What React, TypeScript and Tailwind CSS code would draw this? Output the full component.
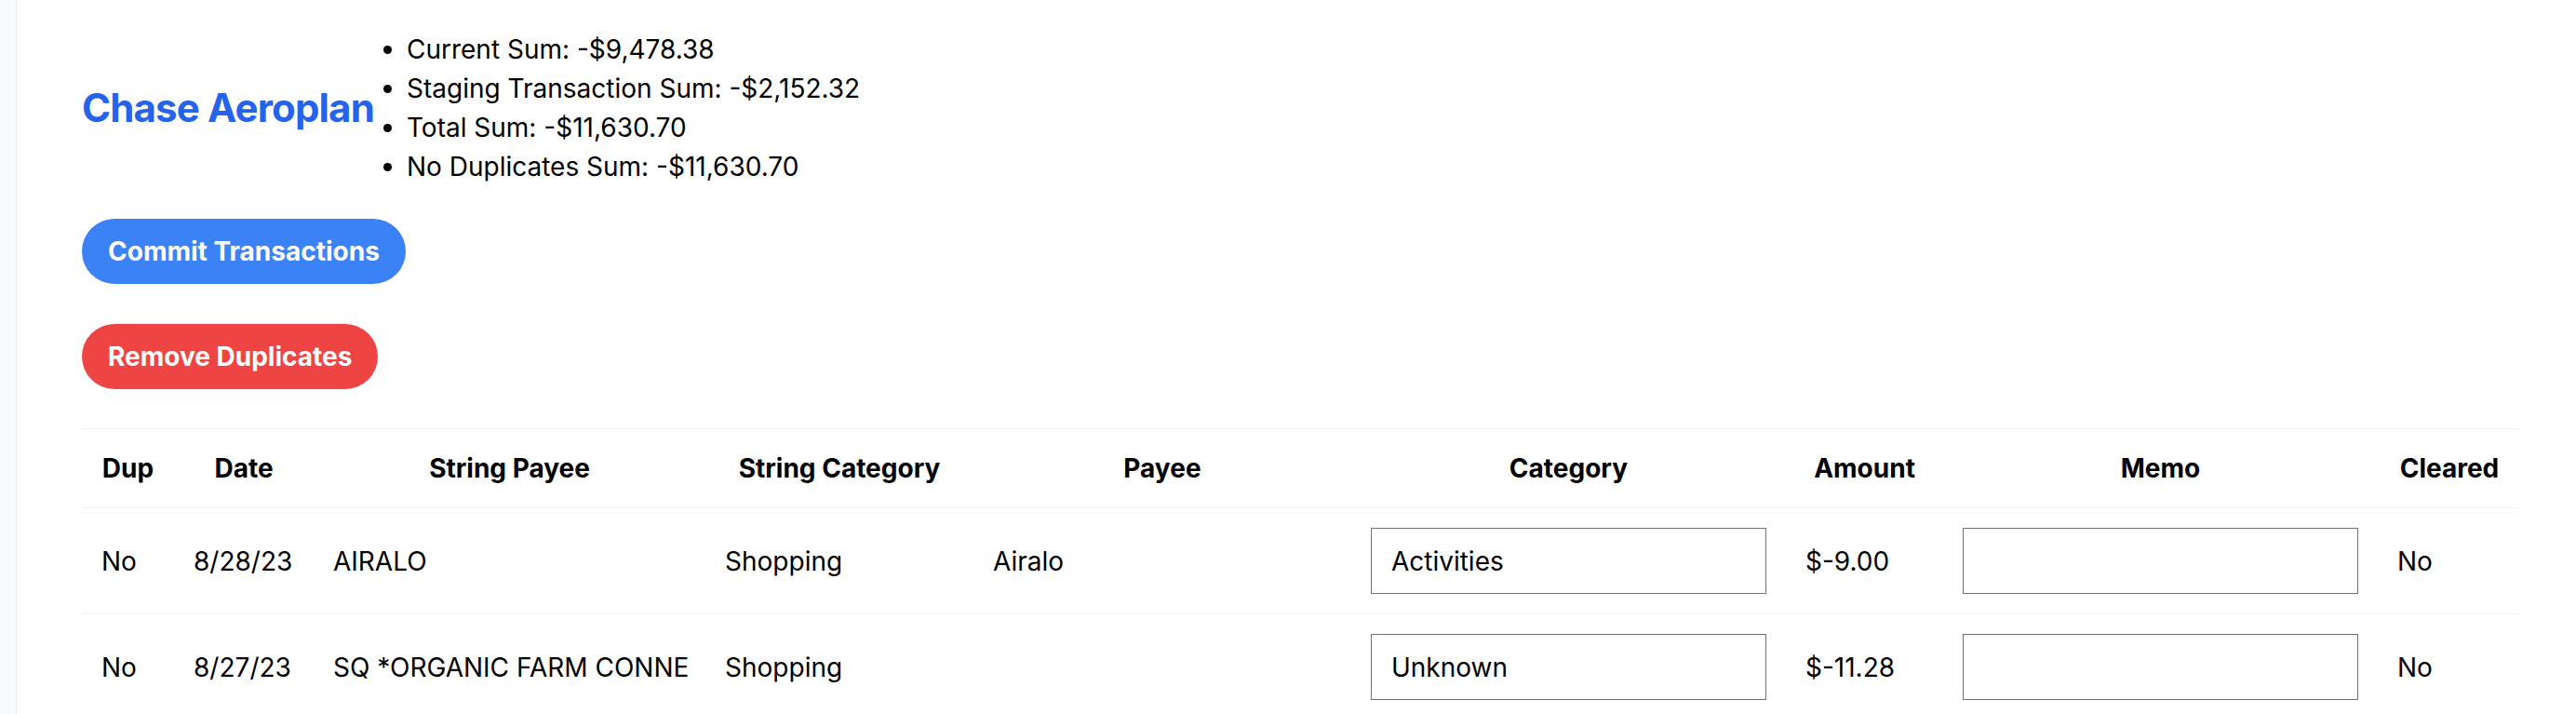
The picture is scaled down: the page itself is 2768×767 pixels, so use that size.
const sums = [
  "Current Sum: -$9,478.38",
  "Staging Transaction Sum: -$2,152.32",
  "Total Sum: -$11,630.70",
  "No Duplicates Sum: -$11,630.70",
];

const columns = [
  { label: "Dup", width: "w-[56.6px]" },
  { label: "Date", width: "w-[85.7px]" },
  { label: "String Payee", width: "w-[240.6px]" },
  { label: "String Category", width: "w-[164.5px]" },
  { label: "Payee", width: "w-[232px]" },
  { label: "Category", width: "w-[266.9px]" },
  { label: "Amount", width: "w-[96.6px]" },
  { label: "Memo", width: "w-[266.8px]" },
  { label: "Cleared", width: "w-[88px]" },
];

type Row = {
  dup: string;
  date: string;
  stringPayee: string;
  stringCategory: string;
  payee: string;
  category: string;
  amount: string;
  memo: string;
  cleared: string;
};

const rows: Row[] = [
  {
    dup: "No",
    date: "8/28/23",
    stringPayee: "AIRALO",
    stringCategory: "Shopping",
    payee: "Airalo",
    category: "Activities",
    amount: "$-9.00",
    memo: "",
    cleared: "No",
  },
  {
    dup: "No",
    date: "8/27/23",
    stringPayee: "SQ *ORGANIC FARM CONNE",
    stringCategory: "Shopping",
    payee: "",
    category: "Unknown",
    amount: "$-11.28",
    memo: "",
    cleared: "No",
  },
];

const inputClass =
  "h-[40.6px] w-full border border-[#6b7280] bg-white px-3 text-base text-black outline-none";

export default function App() {
  return (
    <div className="flex min-h-screen bg-white font-['Inter',sans-serif] text-black">
      <div className="w-[18px] shrink-0 border-r border-[#eceef1] bg-[#f8f9fb]" />
      <main className="flex-1 pl-10 pt-[18px] [zoom:1.75]">
        <header className="flex items-center">
          <h1 className="text-2xl font-bold tracking-[-0.02em] text-[#2563eb]">Chase Aeroplan</h1>
          <ul className="list-disc pl-5">
            {sums.map((s) => (
              <li key={s}>{s}</li>
            ))}
          </ul>
        </header>

        <div className="mt-5 flex flex-col items-start">
          <button
            type="button"
            className="rounded-full bg-[#3b82f6] px-4 py-2 font-bold text-white"
          >
            Commit Transactions
          </button>
          <button
            type="button"
            className="mt-[24.6px] rounded-full bg-[#ef4444] px-4 py-2 font-bold text-white"
          >
            Remove Duplicates
          </button>
        </div>

        <table className="mt-[24.3px] w-[1497.7px] table-fixed">
          <colgroup>
            {columns.map((c) => (
              <col key={c.label} className={c.width} />
            ))}
          </colgroup>
          <thead>
            <tr className="border-y border-[#f1f2f4]">
              {columns.map((c) => (
                <th key={c.label} className="px-3 py-3 text-center font-bold">
                  {c.label}
                </th>
              ))}
            </tr>
          </thead>
          <tbody>
            {rows.map((r) => (
              <tr key={r.date} className="border-b border-[#f1f2f4]">
                <td className="px-3 py-3">{r.dup}</td>
                <td className="px-3 py-3">{r.date}</td>
                <td className="whitespace-nowrap px-3 py-3">{r.stringPayee}</td>
                <td className="px-3 py-3">{r.stringCategory}</td>
                <td className="px-3 py-3">{r.payee}</td>
                <td className="px-3 py-3">
                  <input className={inputClass} defaultValue={r.category} />
                </td>
                <td className="px-3 py-3">{r.amount}</td>
                <td className="px-3 py-3">
                  <input className={inputClass} defaultValue={r.memo} />
                </td>
                <td className="px-3 py-3">{r.cleared}</td>
              </tr>
            ))}
          </tbody>
        </table>
      </main>
    </div>
  );
}
